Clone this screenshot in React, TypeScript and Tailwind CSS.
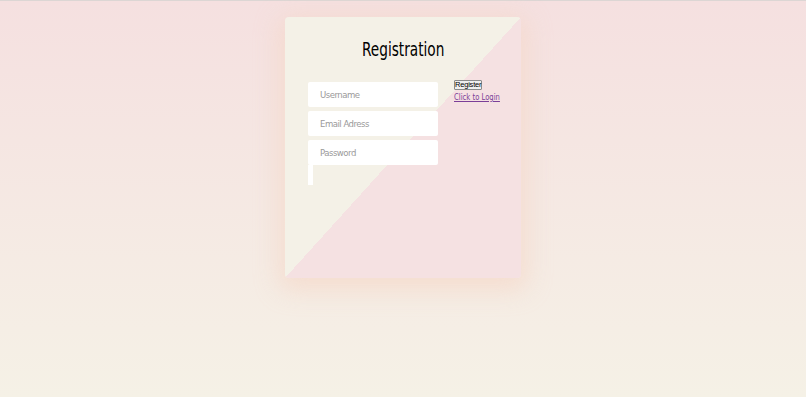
import React from 'react';

const FONT = '"Liberation Sans Narrow", "DejaVu Sans Condensed", Roboto, sans-serif';

const inputCls =
  'w-[130px] h-[25px] bg-white rounded-[2px] pl-[12px] text-[9.5px] tracking-[-0.5px] text-[#555] placeholder:text-[#9a9a9a] outline-none';

export default function App() {
  return (
    <div
      className="w-full h-[397px] flex justify-center items-start pt-[16px] border-t border-[#dcd6d4] bg-[linear-gradient(to_bottom,#f5e0e0,#f5f1e6)]"
      style={{ fontFamily: FONT }}
    >
      <div className="w-[236px] h-[261px] rounded-[4px] bg-[linear-gradient(to_bottom_right,#f4f1e7_50%,#f5e1e2_50%)] shadow-[0_6px_24px_6px_rgba(245,215,200,0.7)] flex flex-col items-center">
        <h1 className="mt-[22px] inline-block scale-x-[0.76] text-[20px] text-black leading-none" style={{ fontFamily: FONT }}>
          Registration
        </h1>
        <form className="mt-[23px] w-full flex pl-[23px] gap-[16px]" onSubmit={e => e.preventDefault()}>
          <div className="flex flex-col gap-[4px]">
            <input placeholder="Username" className={inputCls} />
            <input placeholder="Email Adress" className={inputCls} />
            <input type="password" placeholder="Password" className={inputCls} />
            <div className="w-[5px] h-[20px] bg-white -mt-[4px]" />
          </div>
          <div className="flex flex-col items-start -mt-[2px]">
            <button
              type="submit"
              className="w-[28px] h-[10px] p-0 leading-none text-[7.5px] tracking-[-0.2px] text-black bg-[#efefef] border border-[#8a8a8a] rounded-[1px] text-center"
              style={{ fontFamily: 'Arial, "Liberation Sans", sans-serif' }}
            >
              Register
            </button>
            <a
              href="#"
              className="mt-[1px] origin-left scale-x-[0.8] text-[9.5px] leading-[11px] text-[#7b3f98] underline"
            >
              Click to Login
            </a>
          </div>
        </form>
      </div>
    </div>
  );
}
